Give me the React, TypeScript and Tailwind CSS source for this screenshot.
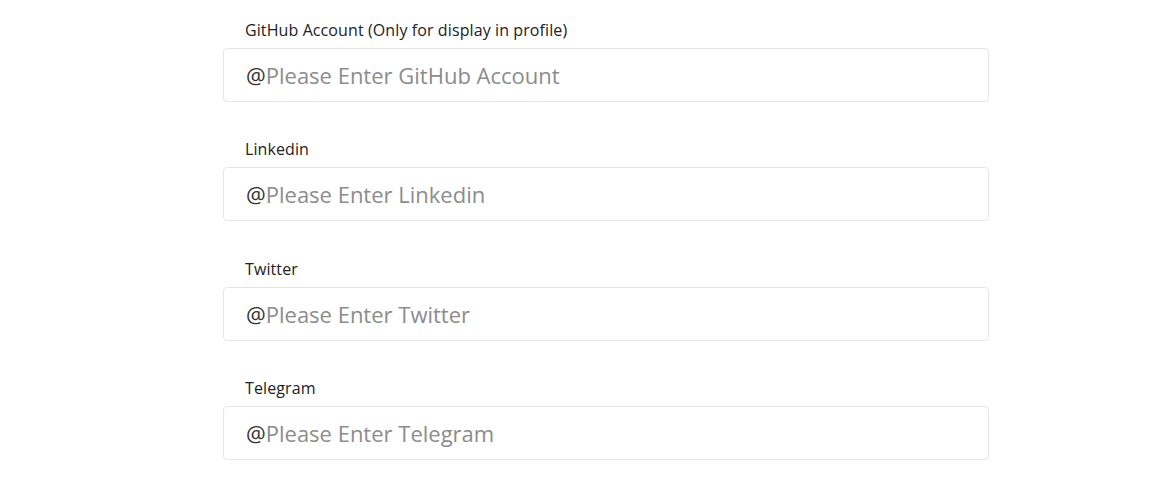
import React from "react";

const fields = [
  { label: "GitHub Account (Only for display in profile)", placeholder: "Please Enter GitHub Account" },
  { label: "Linkedin", placeholder: "Please Enter Linkedin" },
  { label: "Twitter", placeholder: "Please Enter Twitter" },
  { label: "Telegram", placeholder: "Please Enter Telegram" },
];

export default function App() {
  return (
    <div className="min-h-[480px] w-full bg-white pt-[20px]" style={{ fontFamily: '"Open Sans", "Noto Sans", sans-serif' }}>
      <div className="ml-[223px] flex w-[766px] flex-col gap-[37.33px]">
        {fields.map((f) => (
          <div key={f.label} className="flex flex-col gap-[8px]">
            <label className="pl-[22px] text-[16px] leading-[20px] tracking-[0.1px] text-[#222]">{f.label}</label>
            <div className="flex h-[54px] items-center rounded-[4px] border border-[#e6e6e6] bg-white pl-[22px]">
              <span className="text-[22px] leading-[30px] text-[#333]">@</span>
              <input
                className="flex-1 bg-transparent text-[22px] leading-[30px] text-[#333] outline-none placeholder:text-[#8c8c8c]"
                placeholder={f.placeholder}
              />
            </div>
          </div>
        ))}
      </div>
    </div>
  );
}
